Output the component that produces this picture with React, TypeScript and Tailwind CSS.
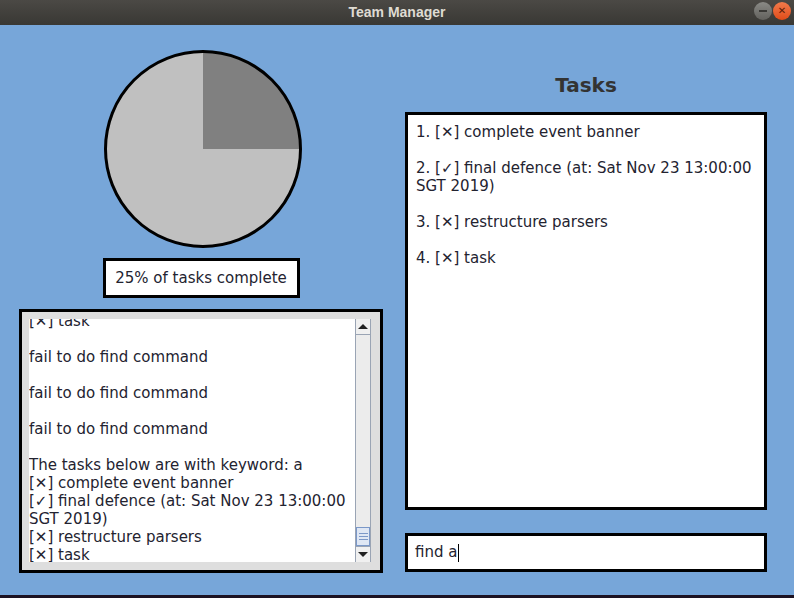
import React from 'react'

const font = { fontFamily: '"DejaVu Sans", "Liberation Sans", sans-serif' }

const tasks = [
  '1. [✕] complete event banner',
  '',
  '2. [✓] final defence (at: Sat Nov 23 13:00:00',
  'SGT 2019)',
  '',
  '3. [✕] restructure parsers',
  '',
  '4. [✕] task',
]

const log = [
  '[✕] task',
  '',
  'fail to do find command',
  '',
  'fail to do find command',
  '',
  'fail to do find command',
  '',
  'The tasks below are with keyword: a',
  '[✕] complete event banner',
  '[✓] final defence (at: Sat Nov 23 13:00:00',
  'SGT 2019)',
  '[✕] restructure parsers',
  '[✕] task',
]

function TitleBar() {
  return (
    <div className="flex h-[25px] items-center justify-center bg-gradient-to-b from-[#4b4945] to-[#393834] relative">
      <span
        className="text-[14px] font-bold text-[#dfdbd2]"
        style={{ fontFamily: '"Liberation Sans", sans-serif' }}
      >
        Team Manager
      </span>
      <div className="absolute right-[3px] top-[2px] flex gap-[1px]">
        <div className="flex h-[18px] w-[18px] items-center justify-center rounded-full bg-gradient-to-b from-[#8a8a86] to-[#62615d]">
          <div className="h-[2px] w-[8px] bg-[#3a3936]" />
        </div>
        <div className="flex h-[18px] w-[18px] items-center justify-center rounded-full bg-gradient-to-b from-[#f27a4a] to-[#df4b16] text-[10px] leading-none text-[#5a1c06]">
          ✕
        </div>
      </div>
    </div>
  )
}

function Pie() {
  return (
    <svg width="200" height="200" viewBox="0 0 200 200" className="ml-[4px] block">
      <circle cx="100" cy="100" r="98" fill="#c0c0c0" />
      <path d="M100 100 L100 2 A98 98 0 0 1 198 100 Z" fill="#808080" />
      <circle cx="100" cy="100" r="97.5" fill="none" stroke="#000" strokeWidth="3" />
    </svg>
  )
}

function ScrollBar() {
  return (
    <div className="flex w-[16px] flex-col border-x border-[#9aa4b4] bg-[#ececec]">
      <div className="flex h-[16px] items-center justify-center border-b border-[#9aa4b4] bg-[#f0f0f0]">
        <div className="h-0 w-0 border-x-[5px] border-b-[5px] border-x-transparent border-b-[#222]" />
      </div>
      <div className="flex-1" />
      <div className="flex h-[19px] flex-col items-center justify-center gap-[2px] border border-[#7b98c8] bg-[#dfe7f4]">
        <div className="h-px w-[9px] bg-[#7b98c8]" />
        <div className="h-px w-[9px] bg-[#7b98c8]" />
        <div className="h-px w-[9px] bg-[#7b98c8]" />
      </div>
      <div className="flex h-[16px] items-center justify-center border-t border-[#9aa4b4] bg-[#f0f0f0]">
        <div className="h-0 w-0 border-x-[5px] border-t-[5px] border-x-transparent border-t-[#222]" />
      </div>
    </div>
  )
}

export default function App() {
  return (
    <div className="flex h-[598px] w-[794px] flex-col bg-[#77a6d9] text-[15px] text-[#232330]" style={font}>
      <TitleBar />
      <div className="flex flex-1 gap-[22px] pl-[19px] pr-[27px]">
        <div className="flex w-[364px] flex-col items-center pt-[24px]">
          <Pie />
          <div className="mt-[9px] flex h-[40px] w-[197px] items-center justify-center border-[3px] border-black bg-white">
            25% of tasks complete
          </div>
          <div className="mt-[11px] flex h-[264px] w-full border-[3px] border-black bg-[#dedede] pb-[8px] pl-[7px] pr-[9px] pt-[7px]">
            <div className="flex flex-1 flex-col justify-end overflow-hidden bg-white">
              <div className="flex shrink-0 translate-y-[2px] flex-col">
                {log.map((line, i) => (
                  <div key={i} className="h-[18px] shrink-0 whitespace-pre leading-[18px]">
                    {line}
                  </div>
                ))}
              </div>
            </div>
            <ScrollBar />
          </div>
        </div>
        <div className="flex flex-1 flex-col pt-[48px]">
          <h1 className="text-center text-[20px] font-bold leading-[24px] text-[#333]">Tasks</h1>
          <div className="mt-[15px] h-[398px] border-[3px] border-black bg-white px-[8px] pt-[8px]">
            {tasks.map((line, i) => (
              <div key={i} className="h-[18px] whitespace-pre leading-[18px]">
                {line}
              </div>
            ))}
          </div>
          <div className="mt-[23px] flex h-[39px] items-center border-[3px] border-black bg-white px-[7px]">
            <span>find a</span>
            <span className="ml-px h-[18px] w-px bg-black" />
          </div>
        </div>
      </div>
      <div className="h-[3px] bg-[#1c1222]" />
    </div>
  )
}
